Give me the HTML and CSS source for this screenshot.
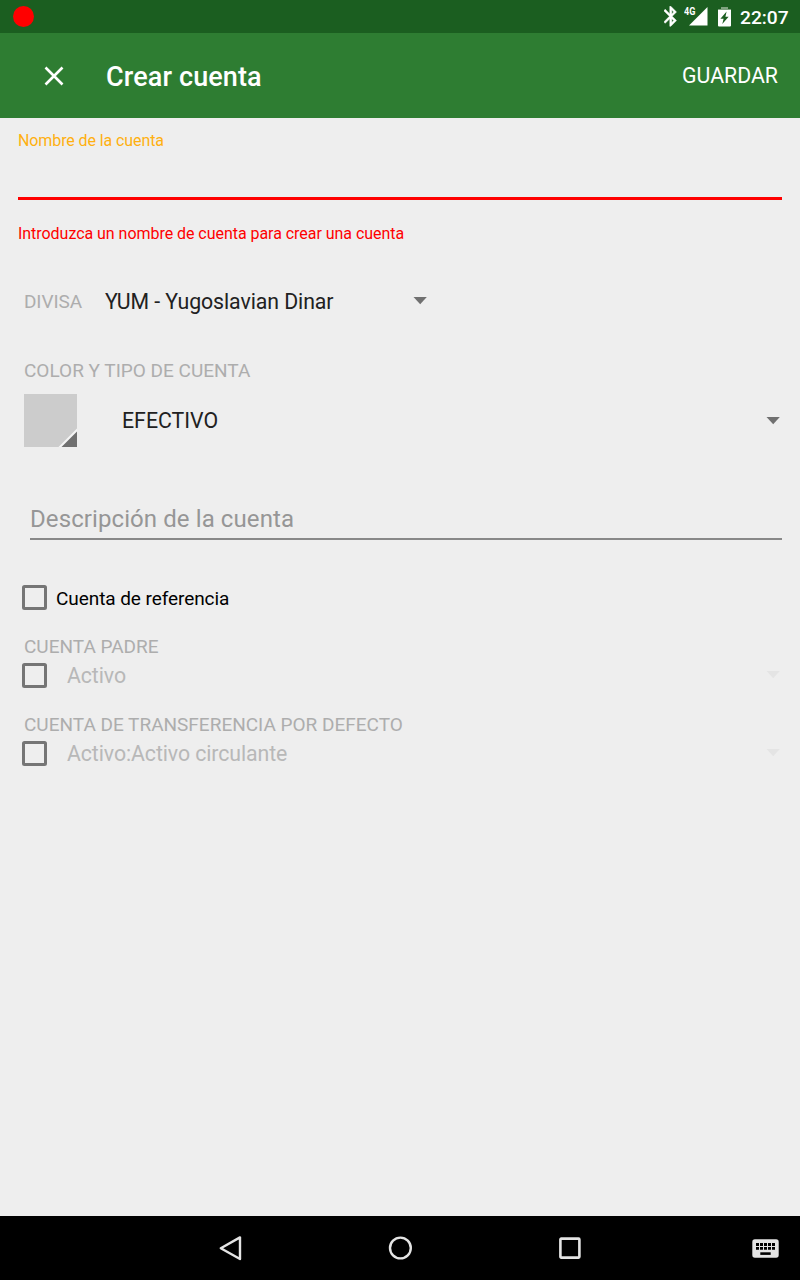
FILE: index.html
```html
<!DOCTYPE html>
<html lang="es">
<head>
<meta charset="utf-8">
<title>Crear cuenta</title>
<link rel="stylesheet" href="styles.css">
</head>
<body>
<div class="screen">
  <div class="status-bar">
    <span class="record-dot"></span>
    <div class="status-icons">
      <svg class="bluetooth" width="13" height="21" viewBox="5.2 1.7 13 21"><path fill="#fff" stroke="#fff" stroke-width=".5" d="M17.7 7.7 12 2h-1v7.6L6.4 5 5 6.4l5.6 5.6L5 17.6 6.4 19l4.6-4.6V22h1l5.7-5.7-4.3-4.3 4.3-4.3zM13 5.8l1.9 1.9L13 9.6V5.8zm1.9 10.5L13 18.2v-3.8l1.9 1.9z"/></svg>
      <div class="signal">
        <svg width="19" height="19" viewBox="0 0 19 19"><path fill="#fff" d="M0 18.5 18.5 0v18.5z"/></svg>
        <span class="network">4G</span>
      </div>
      <svg class="battery" width="13" height="20" viewBox="0 0 13 20"><path fill="#7fa380" d="M3 0h7v2h3v2H0V2h3z"/><path fill="#fff" fill-rule="evenodd" d="M0 3h13v15.5a1 1 0 0 1-1 1H1a1 1 0 0 1-1-1zM8.6 4.6 2.4 11.8H5.6L4.3 17l6.3-7.2H7.4z"/></svg>
      <span class="clock">22:07</span>
    </div>
  </div>
  <header class="app-bar">
    <svg class="close" width="20" height="20" viewBox="0 0 20 20"><path d="M1.5 1.5l17 17M18.5 1.5l-17 17" stroke="#fff" stroke-width="2.6"/></svg>
    <h1 class="title">Crear cuenta</h1>
    <span class="save">GUARDAR</span>
  </header>
  <main class="form">
    <div class="name-label">Nombre de la cuenta</div>
    <div class="name-input"></div>
    <div class="name-error">Introduzca un nombre de cuenta para crear una cuenta</div>
    <div class="currency-row">
      <span class="heading currency-label">DIVISA</span>
      <span class="value currency">YUM - Yugoslavian Dinar</span>
      <svg class="arrow" width="14" height="8" viewBox="0 0 14 8"><path d="M.5 0h13.3L7.2 7.3z"/></svg>
    </div>
    <div class="heading">COLOR Y TIPO DE CUENTA</div>
    <div class="type-row">
      <svg class="swatch" width="53" height="53" viewBox="0 0 53 53"><path fill="#ccc" d="M0 0h53v53H0z"/><path fill="#f5f5f5" d="M53 34.5V53H34.5z"/><path fill="#707070" d="M53 37.5V53H37.5z"/></svg>
      <span class="value type">EFECTIVO</span>
      <svg class="arrow" width="14" height="8" viewBox="0 0 14 8"><path d="M.5 0h13.3L7.2 7.3z"/></svg>
    </div>
    <div class="description">Descripción de la cuenta</div>
    <div class="check-row placeholder-row">
      <span class="checkbox"></span>
      <span class="check-label">Cuenta de referencia</span>
    </div>
    <div class="heading">CUENTA PADRE</div>
    <div class="check-row">
      <span class="checkbox"></span>
      <span class="value disabled">Activo</span>
      <svg class="arrow faint" width="14" height="8" viewBox="0 0 14 8"><path d="M.5 0h13.3L7.2 7.3z"/></svg>
    </div>
    <div class="heading transfer">CUENTA DE TRANSFERENCIA POR DEFECTO</div>
    <div class="check-row">
      <span class="checkbox"></span>
      <span class="value disabled">Activo:Activo circulante</span>
      <svg class="arrow faint" width="14" height="8" viewBox="0 0 14 8"><path d="M.5 0h13.3L7.2 7.3z"/></svg>
    </div>
  </main>
  <nav class="nav-bar">
    <svg class="back" width="24" height="26" viewBox="0 0 24 26"><path d="M22 2.4v21.6L2.8 13.2z" fill="none" stroke="#e4e4e4" stroke-width="2.4" stroke-linejoin="round"/></svg>
    <svg class="home" width="24" height="24" viewBox="0 0 24 24"><circle cx="12.4" cy="12" r="10.4" fill="none" stroke="#e4e4e4" stroke-width="2.4"/></svg>
    <svg class="recents" width="22" height="22" viewBox="0 0 22 22"><rect x="1.4" y="1.6" width="19" height="19" rx=".8" fill="none" stroke="#e4e4e4" stroke-width="2.6"/></svg>
    <svg class="keyboard" width="27" height="19" viewBox="0 0 27 19"><rect x=".3" y=".3" width="26.4" height="18.4" rx="2.6" fill="#e4e4e4"/><path d="M4 5.5h19M4 9.4h19" stroke="#000" stroke-width="2.8" stroke-dasharray="3 1"/><path d="M8.3 14.6h10.4" stroke="#000" stroke-width="2.6"/></svg>
  </nav>
</div>
</body>
</html>
```
FILE: styles.css
```css
* { box-sizing: border-box; }
body { margin: 0; font-family: Roboto, sans-serif; background: #eee; }
svg { display: block; flex: none; }
.screen { width: 800px; height: 1280px; display: flex; flex-direction: column; background: #eee; overflow: hidden; }

.status-bar { height: 33px; flex: none; background: #1b5e20; display: flex; justify-content: space-between; align-items: center; padding: 0 11px 0 13px; }
.record-dot { width: 21px; height: 21px; border-radius: 50%; background: #f00; }
.status-icons { display: flex; align-items: center; color: #fff; }
.signal { position: relative; margin-left: 12px; }
.network { position: absolute; left: -5px; top: 0; font-size: 10.5px; line-height: 10px; font-weight: 700; transform: scaleX(.86); transform-origin: left; }
.battery { margin: 0 9px 0 10px; }
.clock { width: 49px; font-size: 19.2px; font-weight: 500; line-height: 22px; margin-top: 2px; }

.app-bar { height: 85px; flex: none; background: #2e7d32; color: #fff; display: flex; align-items: center; padding: 0 22px 0 44px; }
.title { margin: 2px 0 0 42px; font-size: 27px; line-height: 32px; font-weight: 500; letter-spacing: .12px; }
.save { margin: 1px 0 0 auto; font-size: 21.3px; line-height: 26px; }

.form { flex: 1; padding: 12px 18px 0; }
.name-label, .name-error { font-size: 16px; line-height: 22px; white-space: nowrap; }
.name-label { color: #ffb010; letter-spacing: -.1px; }
.name-input { height: 48px; border-bottom: 3px solid #f00; }
.name-error { margin-top: 23px; color: #f00; letter-spacing: -.04px; }
.heading { font-size: 19px; line-height: 22px; color: #adadad; padding-left: 6px; white-space: nowrap; }
.value { font-size: 21.3px; line-height: 26px; color: #212121; white-space: nowrap; }
.arrow { margin-left: auto; fill: #707070; }
.currency-row { display: flex; align-items: center; width: 409px; height: 26px; margin: 43px 0 46px; }
.currency-label { width: 87px; margin-top: 1px; letter-spacing: -.1px; }
.currency { margin-top: 2px; letter-spacing: -.08px; }
.type-row { display: flex; align-items: center; margin-top: 12px; padding: 0 2px 0 6px; }
.type { margin: 1px 0 0 45px; }
.description { margin: 51px 0 45px 12px; height: 42px; border-bottom: 2px solid #888; font-size: 24px; line-height: 42px; letter-spacing: .09px; color: #969696; }
.check-row { display: flex; align-items: center; height: 25px; padding: 0 2px 0 4px; }
.placeholder-row { margin-bottom: 26px; }
.heading + .check-row { margin-top: 5px; }
.transfer { margin-top: 26px; }
.checkbox { width: 25px; height: 25px; flex: none; border: 3px solid #757575; border-radius: 2.5px; }
.check-label { margin: 2px 0 0 9px; font-size: 19px; line-height: 22px; letter-spacing: -.07px; color: #000; }
.disabled { margin: 1px 0 0 20px; letter-spacing: -.09px; color: #b8b8b8; }
.faint { fill: #e4e4e4; margin-bottom: 2px; }

.nav-bar { height: 64px; flex: none; background: #000; display: flex; align-items: center; padding: 0 21px 0 218px; }
.home { margin-left: 146px; }
.recents { margin-left: 147px; }
.keyboard { margin-left: auto; }
```
